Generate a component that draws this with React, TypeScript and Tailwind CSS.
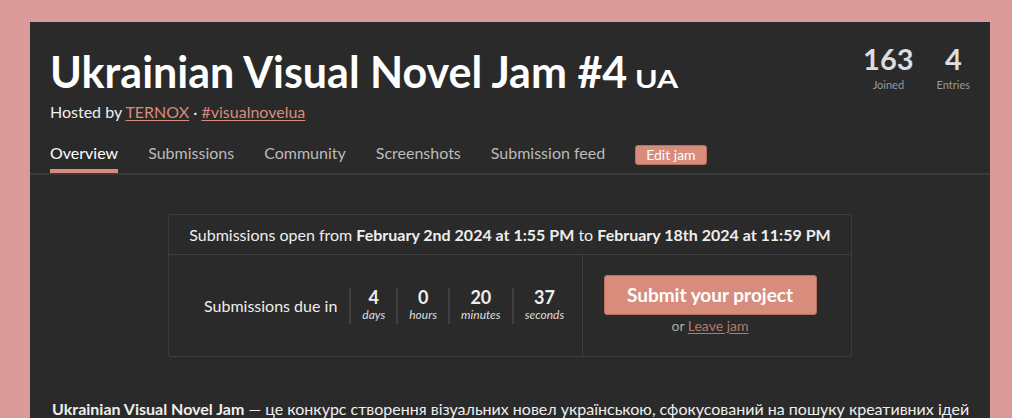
import React from "react";

function Unit({ n, label }: { n: string; label: string }) {
  return (
    <div className="flex flex-col items-center border-l-2 border-[#3f3f3f] h-[36px] px-[11px] leading-none">
      <div className="text-[18px] font-bold text-[#eee] leading-[20px] mt-[-1px]">{n}</div>
      <div className="text-[12px] italic text-[#ddd] leading-[14px] mt-[1px]">{label}</div>
    </div>
  );
}

export default function App() {
  return (
    <div
      className="w-[1012px] h-[418px] overflow-hidden bg-[#db9a9a] pt-[22px] pl-[30px] pr-[22px]"
      style={{ fontFamily: "Lato, 'Noto Sans', sans-serif" }}
    >
      <div className="bg-[#2a2a2a] h-[500px] text-[#eee]">
        <div className="px-[20px] pt-[24px] flex justify-between">
          <div>
            <h1 className="text-[43px] font-bold text-white leading-[52px] flex items-baseline">
              Ukrainian Visual Novel Jam #4
              <span className="text-[25px] ml-[8px] inline-block origin-left scale-x-[1.22]">UA</span>
            </h1>
            <div className="text-[16px] mt-[-2px] leading-[20px]">
              Hosted by{" "}
              <a className="underline text-[#d88c7c] underline-offset-2">TERNOX</a> ·{" "}
              <a className="underline text-[#d88c7c] underline-offset-2">#visualnovelua</a>
            </div>
          </div>
          <div className="flex gap-[23px] mt-[-2px]">
            <div className="flex flex-col items-center">
              <div className="text-[29px] font-bold text-[#ddd] leading-[30px]">163</div>
              <div className="text-[11px] text-[#999] mt-[3px]">Joined</div>
            </div>
            <div className="flex flex-col items-center">
              <div className="text-[29px] font-bold text-[#ddd] leading-[30px]">4</div>
              <div className="text-[11px] text-[#999] mt-[3px]">Entries</div>
            </div>
          </div>
        </div>
        <div className="mt-[15px] px-[20px] flex items-end gap-[30px] border-b-2 border-[#3a3a3a] h-[38px] text-[16px]">
          <div className="text-white border-b-4 border-[#d88c7c] pb-[6px] leading-[20px]">Overview</div>
          <div className="text-[#bbb] pb-[10px] leading-[20px]">Submissions</div>
          <div className="text-[#bbb] pb-[10px] leading-[20px]">Community</div>
          <div className="text-[#bbb] pb-[10px] leading-[20px]">Screenshots</div>
          <div className="text-[#bbb] pb-[10px] leading-[20px]">Submission feed</div>
          <div className="pb-[8px]">
            <div className="bg-[#d88c7c] border border-[#b87060] rounded-[3px] text-white text-[14px] leading-[16px] px-[10px] py-[1px]">Edit jam</div>
          </div>
        </div>

        <div className="flex justify-center mt-[39px]">
          <div className="w-[684px] border border-[#3d3d3d] rounded-[3px]">
            <div className="h-[40px] flex items-center justify-center text-[16px] border-b border-[#3d3d3d]">
              <span>
                Submissions open from <b>February 2nd 2024 at 1:55 PM</b> to{" "}
                <b>February 18th 2024 at 11:59 PM</b>
              </span>
            </div>
            <div className="flex h-[101px]">
              <div className="w-[414px] border-r border-[#3d3d3d] flex items-center pl-[35px]">
                <div className="text-[16px] mr-[12px] mt-[1px]">Submissions due in</div>
                <div className="flex">
                  <Unit n="4" label="days" />
                  <Unit n="0" label="hours" />
                  <Unit n="20" label="minutes" />
                  <Unit n="37" label="seconds" />
                </div>
              </div>
              <div className="flex-1 flex flex-col items-center pt-[20px] pr-[14px]">
                <div className="bg-[#d88c7c] border border-[#b87060] rounded-[3px] w-[213px] h-[40px] flex items-center justify-center text-white font-bold text-[19px]">
                  Submit your project
                </div>
                <div className="text-[14px] text-[#aaa] mt-[0px]">
                  or <a className="underline text-[#b57a6c] underline-offset-2">Leave jam</a>
                </div>
              </div>
            </div>
          </div>
        </div>

        <div className="px-[22px] mt-[40px] text-[16px] whitespace-nowrap">
          <b>Ukrainian Visual Novel Jam</b> — це конкурс створення візуальних новел українською, сфокусований на пошуку креативних ідей
        </div>
      </div>
    </div>
  );
}
